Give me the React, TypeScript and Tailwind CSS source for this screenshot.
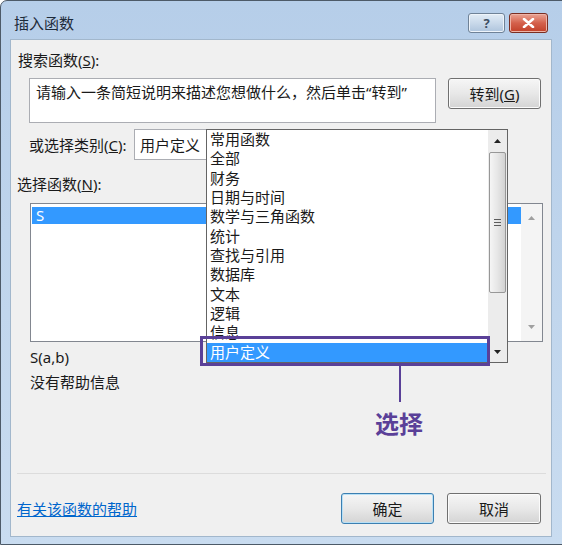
import React from 'react'

const categories = [
  '常用函数',
  '全部',
  '财务',
  '日期与时间',
  '数学与三角函数',
  '统计',
  '查找与引用',
  '数据库',
  '文本',
  '逻辑',
  '信息',
  '用户定义',
]

function Tri({ up, color = '#222' }: { up?: boolean; color?: string }) {
  return (
    <svg width="7" height="4" viewBox="0 0 7 4">
      {up ? <path d="M0 4 L3.5 0 L7 4 Z" fill={color} /> : <path d="M0 0 L7 0 L3.5 4 Z" fill={color} />}
    </svg>
  )
}

function WinButton({ children, focus, className }: { children: React.ReactNode; focus?: boolean; className: string }) {
  return (
    <div
      className={
        'flex items-center justify-center rounded-[3px] border bg-gradient-to-b from-[#f6f6f6] via-[#e8e8e8] to-[#d4d4d4] text-[15px] leading-[18px] text-[#1a1a1a] ' +
        (focus ? 'border-[#3c7fb1] shadow-[inset_0_0_0_1px_#b8e0f6]' : 'border-[#707070] shadow-[inset_0_0_0_1px_#fbfbfb]') +
        ' ' +
        className
      }
    >
      {children}
    </div>
  )
}

export default function App() {
  return (
    <div className="w-[562px] h-[546px] bg-white overflow-hidden font-['Noto_Sans','Noto_Sans_CJK_SC',sans-serif]">
      <div className="w-[570px] h-[545px] rounded-t-[7px] border border-[#4d5a68] bg-gradient-to-b from-[#b6cee9] to-[#c9dcf0] flex flex-col">
        {/* Title bar */}
        <div className="h-[38px] flex items-start">
          <span className="pl-[13px] pt-[12px] text-[15px] leading-[20px] text-[#1e2b3a]">插入函数</span>
          <div className="ml-auto mr-[21px] mt-[12px] flex gap-[4px]">
            <div className="w-[37px] h-[20px] rounded-[3px] border border-[#6f8297] bg-gradient-to-b from-[#e2ecf6] via-[#c9d9ea] to-[#aec4dc] flex items-center justify-center text-[13px] font-bold leading-none text-[#3d4e62] shadow-[inset_0_0_0_1px_#eef4fa]">
              ?
            </div>
            <div className="w-[39px] h-[20px] rounded-[3px] border border-[#7a2e22] bg-gradient-to-b from-[#e9a394] via-[#d4614c] to-[#c23f28] flex items-center justify-center shadow-[inset_0_0_0_1px_#eeb3a6]">
              <svg width="13" height="10" viewBox="0 0 13 10">
                <path d="M2 1 L11 9 M11 1 L2 9" stroke="#fff" strokeWidth="2.6" strokeLinecap="round" />
              </svg>
            </div>
          </div>
        </div>

        {/* Client area */}
        <div className="relative ml-[9px] w-[542px] h-[498px] bg-[#f0f0f0] border border-[#a2b7cc] text-[15px] leading-[18px] text-[#1a1a1a]">
          <div className="pt-[11px] pl-[7px]">
            搜索函数(<span className="underline">S</span>):
          </div>

          <div className="mt-[9px] pl-[18px] flex items-start gap-[12px]">
            <div className="w-[407px] h-[45px] bg-white border border-[#abadb3] px-[6px] pt-[4px]">
              请输入一条简短说明来描述您想做什么，然后单击“转到”
            </div>
            <WinButton className="w-[93px] h-[31px]">
              转到(<span className="underline">G</span>)
            </WinButton>
          </div>

          <div className="mt-[6px] pl-[18px] flex items-center">
            <span className="w-[105px]">
              或选择类别(<span className="underline">C</span>):
            </span>
            <div className="w-[260px] h-[31px] bg-white border border-[#abadb3] flex items-center pl-[5px]">用户定义</div>
          </div>

          <div className="mt-[15px] pl-[6px]">
            选择函数(<span className="underline">N</span>):
          </div>

          <div className="mt-[10px] ml-[19px] w-[513px] h-[139px] bg-white border border-[#828790] flex">
            <div className="flex-1 pt-[3px] pl-[1px]">
              <div className="h-[17px] bg-[#3399ff] text-white pl-[4px] leading-[17px]">S</div>
            </div>
            <div className="w-[21px] bg-[#f4f4f4] flex flex-col items-center justify-between pt-[12px] pb-[12px]">
              <Tri up color="#a0a0a0" />
              <Tri color="#a0a0a0" />
            </div>
          </div>

          <div className="mt-[6px] pl-[19px]">S(a,b)</div>
          <div className="mt-[7px] pl-[19px]">没有帮助信息</div>

          <div className="mt-[82px] ml-[6px] w-[529px] h-px bg-[#dcdcdc]" />

          <div className="mt-[19px] pl-[6px] pr-[10px] flex items-center">
            <span className="text-[#0066cc] underline">有关该函数的帮助</span>
            <WinButton focus className="ml-auto w-[93px] h-[31px]">确定</WinButton>
            <WinButton className="ml-[13px] w-[94px] h-[31px]">取消</WinButton>
          </div>

          {/* Category dropdown list */}
          <div className="absolute left-[195px] top-[89px] w-[302px] h-[234px] bg-white border border-[#646464] flex">
            <div className="flex-1 flex flex-col">
              {categories.map((c, i) =>
                i === categories.length - 1 ? (
                  <div key={c} className="h-[19.4px] bg-[#3399ff] text-white pl-[3px] leading-[19px]">
                    {c}
                  </div>
                ) : (
                  <div key={c} className="h-[19.4px] pl-[3px] leading-[19px]">
                    {c}
                  </div>
                ),
              )}
            </div>
            <div className="w-[19px] bg-[#ececec] flex flex-col items-center">
              <div className="h-[22px] flex items-center justify-center">
                <Tri up />
              </div>
              <div className="w-[17px] h-[141px] rounded-[2px] border border-[#979797] bg-gradient-to-r from-[#f5f5f5] via-[#e6e6e6] to-[#d2d2d2] flex flex-col items-center justify-center gap-[2px]">
                <div className="w-[7px] h-px bg-[#5c5c5c]" />
                <div className="w-[7px] h-px bg-[#5c5c5c]" />
                <div className="w-[7px] h-px bg-[#5c5c5c]" />
              </div>
              <div className="mt-auto h-[20px] flex items-center justify-center">
                <Tri />
              </div>
            </div>
          </div>

          {/* Annotation */}
          <div className="absolute left-[189px] top-[296px] w-[290px] h-[30px] border-[3px] border-[#5a4098]" />
          <div className="absolute left-[388px] top-[326px] w-[2px] h-[36px] bg-[#5a4098]" />
          <div className="absolute left-[364px] top-[368px] text-[24px] leading-[30px] font-bold text-[#5a4098] font-['Noto_Sans_CJK_SC',sans-serif]">
            选择
          </div>
        </div>
      </div>
    </div>
  )
}
